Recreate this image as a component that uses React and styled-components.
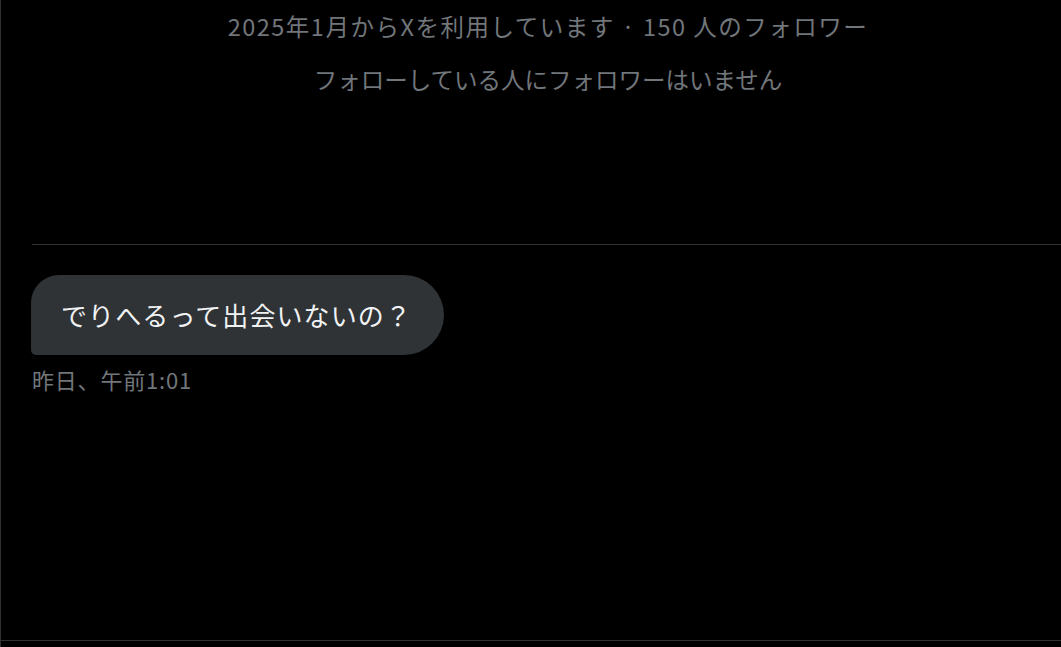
import styled, { createGlobalStyle } from 'styled-components'

const GlobalStyle = createGlobalStyle`
  html, body {
    margin: 0;
    padding: 0;
    background: #000000;
    overflow: hidden;
  }
  body {
    font-family: "Noto Sans CJK JP", "Noto Sans", "Liberation Sans", sans-serif;
  }
`;

const Page = styled.div`
  width: 1095px;
  height: 647px;
  border-left: 1px solid #2f3336;
  box-sizing: border-box;
  display: flex;
  flex-direction: column;
`;

const Content = styled.div`
  height: 640px;
  border-bottom: 1px solid #2f3336;
  display: flex;
  flex-direction: column;
`;

const Header = styled.header`
  padding-top: 10px;
  display: flex;
  flex-direction: column;
  align-items: center;
  gap: 21px;
  height: 244px;
  box-sizing: border-box;
`;

const Meta = styled.p`
  margin: 0;
  font-size: 23.5px;
  line-height: 32px;
  letter-spacing: ${p => p.$spacing || 0}px;
  color: #71767b;
`;

const Divider = styled.hr`
  margin: 0 0 0 31px;
  border: none;
  border-top: 1px solid #2f3336;
`;

const Thread = styled.section`
  padding: 30px 0 0 30px;
  display: flex;
  flex-direction: column;
  align-items: flex-start;
  gap: 10px;
`;

const Bubble = styled.div`
  background: #2f3336;
  color: #f1f2f3;
  font-size: 26px;
  line-height: 34px;
  letter-spacing: 1.1px;
  padding: 23px 32px 23px 30px;
  border-radius: 28px 40px 40px 5px;
`;

const Time = styled.span`
  font-size: 22px;
  line-height: 28px;
  letter-spacing: 0.8px;
  color: #71767b;
  padding-left: 1px;
`;

export default function App() {
  return (
    <>
      <GlobalStyle />
      <Page>
        <Content>
          <Header>
            <Meta $spacing={1.5}>2025年1月からXを利用しています · 150 人のフォロワー</Meta>
            <Meta>フォローしている人にフォロワーはいません</Meta>
          </Header>
          <Divider />
          <Thread>
            <Bubble>でりへるって出会いないの？</Bubble>
            <Time>昨日、午前1:01</Time>
          </Thread>
        </Content>
      </Page>
    </>
  )
}
